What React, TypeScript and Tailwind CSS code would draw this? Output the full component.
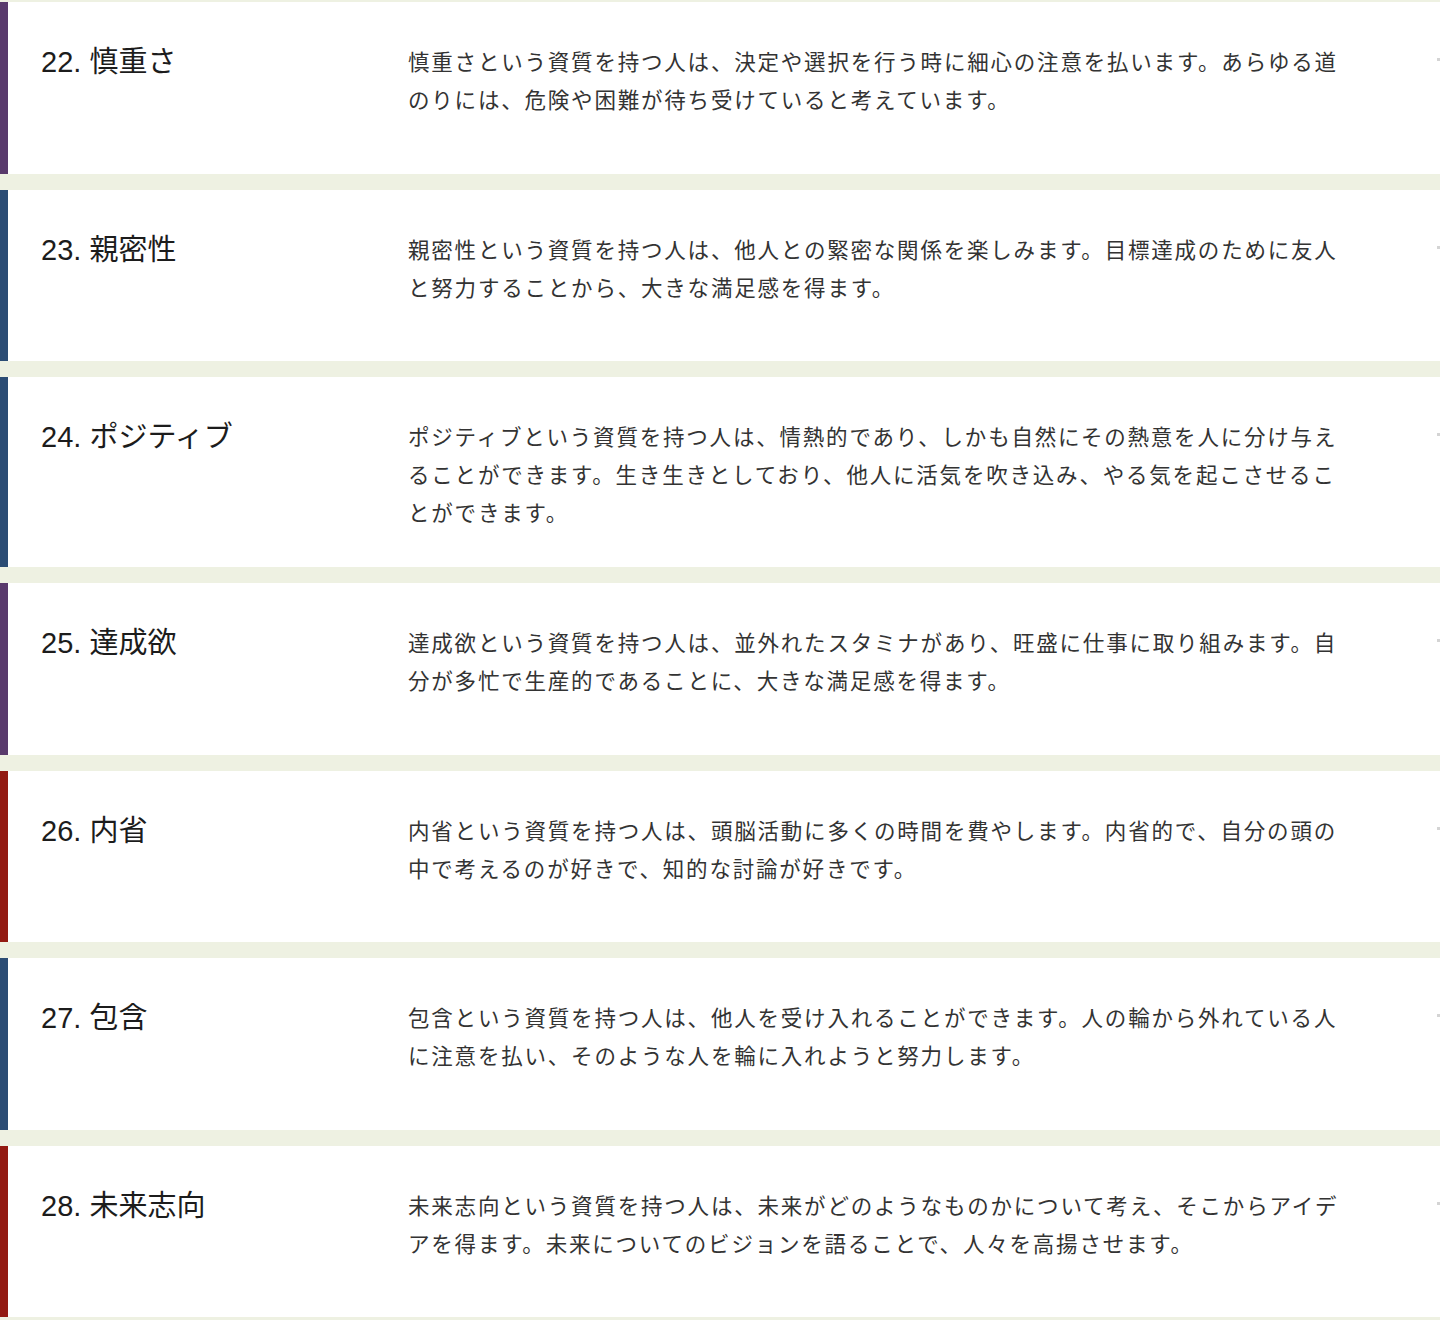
const STRENGTHS: readonly {
  readonly no: number;
  readonly name: string;
  readonly bar: "purple" | "blue" | "red";
  readonly lines: readonly string[];
}[] = [
  {
    no: 22,
    name: "慎重さ",
    bar: "purple",
    lines: [
      "慎重さという資質を持つ人は、決定や選択を行う時に細心の注意を払います。あらゆる道",
      "のりには、危険や困難が待ち受けていると考えています。",
    ],
  },
  {
    no: 23,
    name: "親密性",
    bar: "blue",
    lines: [
      "親密性という資質を持つ人は、他人との緊密な関係を楽しみます。目標達成のために友人",
      "と努力することから、大きな満足感を得ます。",
    ],
  },
  {
    no: 24,
    name: "ポジティブ",
    bar: "blue",
    lines: [
      "ポジティブという資質を持つ人は、情熱的であり、しかも自然にその熱意を人に分け与え",
      "ることができます。生き生きとしており、他人に活気を吹き込み、やる気を起こさせるこ",
      "とができます。",
    ],
  },
  {
    no: 25,
    name: "達成欲",
    bar: "purple",
    lines: [
      "達成欲という資質を持つ人は、並外れたスタミナがあり、旺盛に仕事に取り組みます。自",
      "分が多忙で生産的であることに、大きな満足感を得ます。",
    ],
  },
  {
    no: 26,
    name: "内省",
    bar: "red",
    lines: [
      "内省という資質を持つ人は、頭脳活動に多くの時間を費やします。内省的で、自分の頭の",
      "中で考えるのが好きで、知的な討論が好きです。",
    ],
  },
  {
    no: 27,
    name: "包含",
    bar: "blue",
    lines: [
      "包含という資質を持つ人は、他人を受け入れることができます。人の輪から外れている人",
      "に注意を払い、そのような人を輪に入れようと努力します。",
    ],
  },
  {
    no: 28,
    name: "未来志向",
    bar: "red",
    lines: [
      "未来志向という資質を持つ人は、未来がどのようなものかについて考え、そこからアイデ",
      "アを得ます。未来についてのビジョンを語ることで、人々を高揚させます。",
    ],
  },
];

const BAR_CLASS = {
  purple: "bg-[#593a6c]",
  blue: "bg-[#2b4c74]",
  red: "bg-[#931a12]",
} as const;

function StrengthRow({ item }: { item: (typeof STRENGTHS)[number] }) {
  return (
    <div className="flex min-h-[171.5px] bg-white">
      <div className={`w-2 shrink-0 ${BAR_CLASS[item.bar]}`} />
      <div className="flex flex-1 items-start pb-9 pt-[41px]">
        <h2 className="w-[400px] shrink-0 pl-[33px] text-[29px] leading-[38px] text-[#1c1c1c] [font-family:'Liberation_Sans','Noto_Sans_CJK_JP',sans-serif]">
          {item.no}. {item.name}
        </h2>
        <p className="-mt-px w-[940px] shrink-0 text-[21.5px] leading-[38px] tracking-[1.8px] text-[#333] [font-family:'Noto_Sans_CJK_JP',sans-serif]">
          {item.lines.map((line, i) => (
            <span key={i} className="block whitespace-nowrap">
              {line}
            </span>
          ))}
        </p>
        <div className="ml-auto mt-[15px] h-[3px] w-[3px] bg-[#d4d4d4]" />
      </div>
    </div>
  );
}

export default function App() {
  return (
    <div className="min-h-[1320px] w-full bg-[#eef1e2] pt-[2px]">
      <div className="flex flex-col gap-4">
        {STRENGTHS.map((item) => (
          <StrengthRow key={item.no} item={item} />
        ))}
      </div>
    </div>
  );
}
